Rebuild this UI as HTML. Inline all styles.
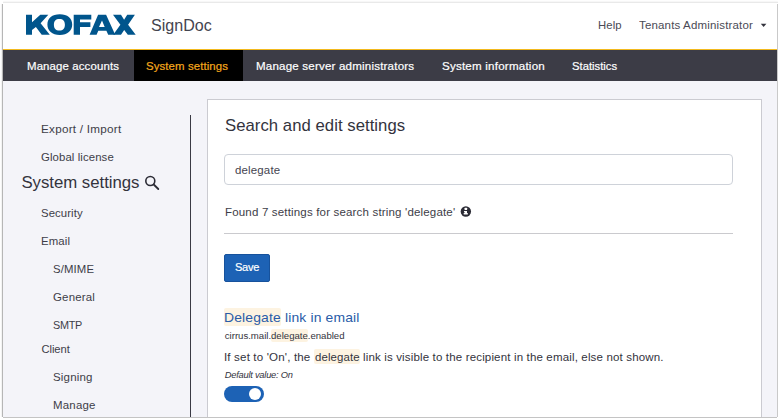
<!DOCTYPE html>
<html><head><meta charset="utf-8"><title>SignDoc</title>
<style>
*{box-sizing:border-box;margin:0;padding:0}
html,body{width:780px;height:420px;overflow:hidden;background:#fff;font-family:"Liberation Sans",sans-serif}
body{position:relative}
.a{position:absolute}
.t{position:absolute;white-space:nowrap;line-height:normal;transform-origin:0 50%}
.hl{position:absolute;background:#fdf3e1;border-radius:2px}
#n1,#n2,#n3,#n4,#n5,#c4{-webkit-text-stroke:0.2px currentColor}
</style></head><body>
<!-- frame -->
<div class="a" style="left:2px;top:3.6px;width:1px;height:413.6px;background:#b6b6b6;box-shadow:-1px 0 1px #f0f0f0"></div>
<div class="a" style="left:3px;top:2px;width:774.5px;height:1px;background:#e9e9e9;box-shadow:0 -1px 1px #f6f6f6"></div>
<div class="a" style="left:777px;top:3.5px;width:1.2px;height:413.6px;background:#c9c9c9"></div>
<div class="a" style="left:2.5px;top:416.8px;width:774.2px;height:1.2px;background:#c4c4c4"></div>
<!-- page bg -->
<div class="a" style="left:3px;top:3px;width:774px;height:413.8px;background:#f4f4f9;overflow:hidden">
 <div class="a" style="left:0;top:0;width:774px;height:46px;background:#fff"></div>
 <div class="a" style="left:0;top:45.6px;width:774px;height:1.5px;background:#f2b91e"></div>
 <div class="a" style="left:0;top:47px;width:774px;height:30.7px;background:#3c3c46"></div>
 <div class="a" style="left:130.6px;top:47px;width:109.1px;height:30.7px;background:#000"></div>
 <div class="a" style="left:186.9px;top:111.8px;width:1.3px;height:310px;background:#3a3a44"></div>
 <div class="a" style="left:204px;top:96px;width:555.3px;height:330px;background:#fff;border:1px solid #cbcbd1"></div>
</div>
<!-- card widgets (page coords) -->
<div class="a" style="left:224px;top:154px;width:509px;height:30.6px;border:1px solid #ced2d9;border-radius:4px;background:#fff"></div>
<div class="a" style="left:224px;top:233px;width:509px;height:1px;background:#cacace"></div>
<div class="a" style="left:224px;top:254px;width:46px;height:27.9px;background:#1d62b5;border:1px solid #17529c;border-radius:2px"></div>
<div class="hl" style="left:224px;top:308.4px;width:56.8px;height:17.3px"></div>
<div class="hl" style="left:271.3px;top:329.1px;width:36.4px;height:12.7px"></div>
<div class="hl" style="left:313.9px;top:349.2px;width:46.1px;height:14.6px"></div>
<div class="a" style="left:224px;top:386px;width:40px;height:16px;border-radius:8px;background:#1d62b5"></div>
<div class="a" style="left:248.8px;top:387.8px;width:12px;height:12px;border-radius:6px;background:#fff"></div>
<!-- icons -->
<svg class="a" style="left:0;top:0" width="780" height="420" viewBox="0 0 780 420">
 <g fill="#00558c">
  <polygon points="26,14.8 32,14.8 32,22.3 40.3,14.8 48.3,14.8 40.6,23.3 49.8,34.8 41.7,34.8 35.9,26.9 32,30 32,34.8 26,34.8"/>
  <path fill-rule="evenodd" d="M59.8,14.200000000000001 C67.49,14.200000000000001 72.2,18.13 72.2,24.55 C72.2,30.97 67.49,34.9 59.8,34.9 C52.11,34.9 47.4,30.97 47.4,24.55 C47.4,18.13 52.11,14.200000000000001 59.8,14.200000000000001 Z M59.4,18.9 C63.03,18.9 64.9,20.89 64.9,24.75 C64.9,28.61 63.03,30.6 59.4,30.6 C55.77,30.6 53.9,28.61 53.9,24.75 C53.9,20.89 55.77,18.9 59.4,18.9 Z"/>
  <polygon points="73.7,14.8 91.3,14.8 91.3,19.4 80,19.4 80,22.3 90.4,22.3 90.4,26.9 80,26.9 80,34.8 73.7,34.8"/>
  <path fill-rule="evenodd" d="M98.1,14.8 L106.1,14.8 L115.2,34.8 L108.2,34.8 L106.4,30.7 L98.3,30.7 L96.6,34.8 L89.6,34.8 Z M102,20.4 L104.7,26.9 L99,26.9 Z"/>
  <polygon points="113,14.8 121,14.8 124.1,19.7 127.2,14.8 134.9,14.8 128.1,24.7 135.7,34.8 127.8,34.8 124.2,30 121,34.8 113.2,34.8 120.4,24.7"/>
 </g>
 <polygon points="760.8,23.7 766.4,23.7 763.6,26.9" fill="#33333d"/>
 <circle cx="150.3" cy="181" r="4.5" fill="none" stroke="#2b2b35" stroke-width="1.6"/>
 <line x1="153.7" y1="184.5" x2="158.3" y2="189" stroke="#2b2b35" stroke-width="1.8" stroke-linecap="round"/>
 <circle cx="465.85" cy="211.45" r="5.2" fill="#2b2b35"/>
 <rect x="464.55" y="207.8" width="2.6" height="2.1" rx="0.5" fill="#fff"/>
 <path d="M464.0,211.1 h3.0 v2.0 h0.8 v1.3 h-4.1 v-1.3 h0.8 v-1.0 h-0.5 z" fill="#fff"/>
</svg>
<div class="t" id="signdoc" style="left:151.20px;top:16.50px;font-size:16px;color:#44444f;letter-spacing:0.027px;transform:scaleX(1.0027);">SignDoc</div>
<div class="t" id="help" style="left:598.40px;top:18.80px;font-size:11.2px;color:#4a4a55;letter-spacing:0.086px;transform:scaleX(1.0111);">Help</div>
<div class="t" id="tenants" style="left:639.00px;top:18.80px;font-size:11.2px;color:#4a4a55;letter-spacing:0.156px;transform:scaleX(1.0279);">Tenants Administrator</div>
<div class="t" id="n1" style="left:26.50px;top:60.00px;font-size:11.2px;color:#ffffff;letter-spacing:0.128px;transform:scaleX(1.0198);">Manage accounts</div>
<div class="t" id="n2" style="left:146.30px;top:60.00px;font-size:11.2px;color:#f5a81c;letter-spacing:0.105px;transform:scaleX(1.0181);">System settings</div>
<div class="t" id="n3" style="left:255.50px;top:60.00px;font-size:11.2px;color:#ffffff;letter-spacing:0.187px;transform:scaleX(1.0329);">Manage server administrators</div>
<div class="t" id="n4" style="left:441.50px;top:60.00px;font-size:11.2px;color:#ffffff;letter-spacing:0.205px;transform:scaleX(1.0352);">System information</div>
<div class="t" id="n5" style="left:572.00px;top:60.00px;font-size:11.2px;color:#ffffff;letter-spacing:0.018px;transform:scaleX(1.0037);">Statistics</div>
<div class="t" id="s1" style="left:40.90px;top:123.00px;font-size:11.2px;color:#3d3d48;letter-spacing:0.244px;transform:scaleX(1.0441);">Export / Import</div>
<div class="t" id="s2" style="left:40.90px;top:151.00px;font-size:11.2px;color:#3d3d48;letter-spacing:0.094px;transform:scaleX(1.0172);">Global license</div>
<div class="t" id="s3" style="left:21.40px;top:172.80px;font-size:16.8px;color:#33333d;letter-spacing:-0.025px;">System settings</div>
<div class="t" id="s4" style="left:40.90px;top:206.80px;font-size:11.2px;color:#3d3d48;letter-spacing:0.084px;transform:scaleX(1.0143);">Security</div>
<div class="t" id="s5" style="left:40.90px;top:234.80px;font-size:11.2px;color:#3d3d48;letter-spacing:0.126px;transform:scaleX(1.0181);">Email</div>
<div class="t" id="s6" style="left:52.90px;top:262.80px;font-size:11.2px;color:#3d3d48;letter-spacing:0.118px;transform:scaleX(1.0148);">S/MIME</div>
<div class="t" id="s7" style="left:52.90px;top:290.80px;font-size:11.2px;color:#3d3d48;letter-spacing:0.174px;transform:scaleX(1.0258);">General</div>
<div class="t" id="s8" style="left:53.20px;top:319.20px;font-size:11.2px;color:#3d3d48;letter-spacing:-0.300px;transform:scaleX(0.9692);">SMTP</div>
<div class="t" id="s9" style="left:41.40px;top:342.90px;font-size:11.2px;color:#3d3d48;letter-spacing:-0.039px;">Client</div>
<div class="t" id="s10" style="left:53.10px;top:370.90px;font-size:11.2px;color:#3d3d48;letter-spacing:0.175px;transform:scaleX(1.0275);">Signing</div>
<div class="t" id="s11" style="left:53.10px;top:398.90px;font-size:11.2px;color:#3d3d48;letter-spacing:0.199px;transform:scaleX(1.0242);">Manage</div>
<div class="t" id="c1" style="left:224.80px;top:115.80px;font-size:16.6px;color:#33333d;letter-spacing:0.045px;transform:scaleX(1.0058);">Search and edit settings</div>
<div class="t" id="c2" style="left:235.30px;top:163.90px;font-size:11.2px;color:#44444f;letter-spacing:0.157px;transform:scaleX(1.0251);">delegate</div>
<div class="t" id="c3" style="left:224.80px;top:205.90px;font-size:11.2px;color:#3d3d48;letter-spacing:0.157px;transform:scaleX(1.0309);">Found 7 settings for search string 'delegate'</div>
<div class="t" id="c4" style="left:235.00px;top:260.90px;font-size:11.2px;color:#ffffff;letter-spacing:-0.300px;transform:scaleX(0.9886);">Save</div>
<div class="t" id="c5" style="left:224.28px;top:309.90px;font-size:13.6px;color:#2a5ca8;letter-spacing:0.148px;transform:scaleX(1.0237);">Delegate link in email</div>
<div class="t" id="c6" style="left:224.80px;top:329.80px;font-size:9.6px;color:#33333d;letter-spacing:-0.010px;">cirrus.mail.delegate.enabled</div>
<div class="t" id="c7a" style="left:223.77px;top:351.00px;font-size:11.2px;color:#33333d;letter-spacing:0.152px;transform:scaleX(1.0332);">If set to 'On', the</div>
<div class="t" id="c7b" style="left:314.80px;top:351.00px;font-size:11.2px;color:#33333d;letter-spacing:0.121px;transform:scaleX(1.0195);">delegate</div>
<div class="t" id="c7c" style="left:362.90px;top:351.00px;font-size:11.2px;color:#33333d;letter-spacing:0.144px;transform:scaleX(1.0301);">link is visible to the recipient in the email, else not shown.</div>
<div class="t" id="c8" style="left:224.80px;top:369.80px;font-size:9.3px;color:#33333d;font-style:italic;letter-spacing:-0.235px;">Default value: On</div>
</body></html>
